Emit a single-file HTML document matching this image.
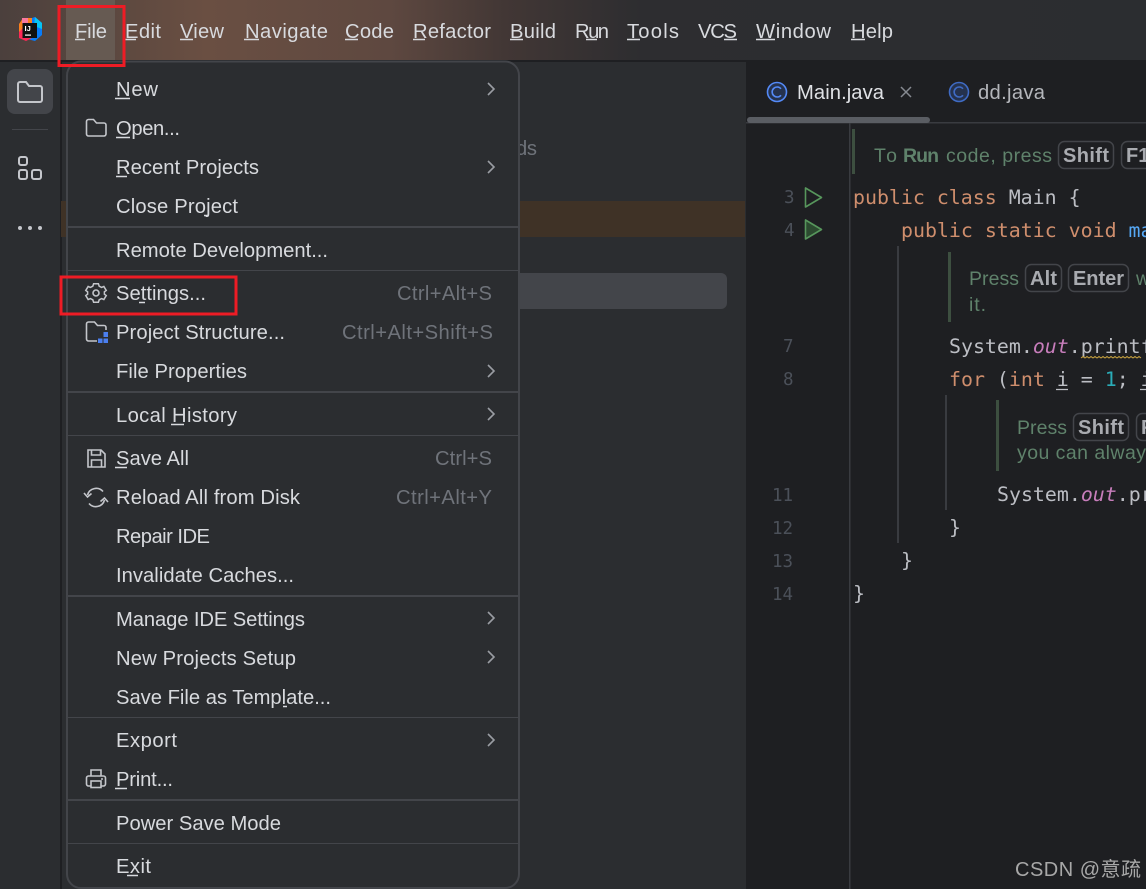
<!DOCTYPE html>
<html><head><meta charset="utf-8"><style>
html,body{margin:0;padding:0;background:#1e1f22;width:1146px;height:889px;overflow:hidden}
svg{display:block}
text{font-family:"Liberation Sans","Noto Sans CJK SC",sans-serif;white-space:pre}
.m{font-size:20.2px;fill:#d8dade}
.b{font-size:20.2px;fill:#d8dade}
.s{font-size:20.2px;fill:#6f737a}
.c{font-family:"DejaVu Sans Mono","Liberation Mono",monospace;font-size:19.9px;fill:#bcbec4}
.k{fill:#cf8e6d}
.g{font-family:"DejaVu Sans Mono","Liberation Mono",monospace;font-size:17.5px;fill:#4b5059}
.d{font-size:19.5px;fill:#5f826b}
.kb{font-size:20px;font-weight:bold;fill:#a9abb0}
.box{fill:none;stroke:#43454a;stroke-width:1.5}
.u{stroke:#d8dade;stroke-width:1.5}
.i{fill:none;stroke:#c4c6cb;stroke-width:1.6}
.a{fill:none;stroke:#9a9da3;stroke-width:1.6}
</style></head><body>
<svg width="1146" height="889" viewBox="0 0 1146 889" xmlns="http://www.w3.org/2000/svg">
<defs><linearGradient id="t" x1="0" x2="1" y1="0" y2="0">
<stop offset="0" stop-color="#4b403d"/><stop offset=".18" stop-color="#6a4f42"/><stop offset=".34" stop-color="#5e4840"/><stop offset=".44" stop-color="#423735"/><stop offset=".56" stop-color="#2d2d30"/><stop offset="1" stop-color="#2b2d30"/>
</linearGradient></defs>
<rect width="1146" height="889" fill="#1e1f22"/>
<rect width="1146" height="60" fill="url(#t)"/>
<rect y="60" width="1146" height="2" fill="#1e1f22"/>
<rect x="66" y="0" width="49" height="60" fill="#665a52"/>
<!-- left strip -->
<rect x="0" y="62" width="60" height="827" fill="#2b2d30"/>
<rect x="60" y="62" width="2" height="827" fill="#1e1f22"/>
<rect x="62" y="62" width="684" height="827" fill="#2b2d30"/>
<rect x="61" y="201" width="684" height="36" fill="#3f3226"/>
<rect x="400" y="273" width="327" height="36" rx="6" fill="#43454a"/>
<text x="516" y="155" class="s" textLength="21">ds</text>
<rect x="7" y="69" width="46" height="45" rx="8" fill="#43454a"/>
<path class="i" style="stroke-width:2" d="M18 84a2 2 0 0 1 2-2h6l3 4h11a2 2 0 0 1 2 2v12a2 2 0 0 1-2 2H20a2 2 0 0 1-2-2z"/>
<rect x="12" y="129" width="36" height="1" fill="#43454a"/>
<g class="i" style="stroke-width:2"><rect x="19" y="157" width="8" height="8" rx="2"/><rect x="19" y="170" width="8" height="9" rx="2"/><rect x="32" y="170" width="9" height="9" rx="2"/></g>
<g fill="#c4c6cb"><circle cx="20" cy="228" r="2"/><circle cx="30" cy="228" r="2"/><circle cx="40" cy="228" r="2"/></g>
<!-- logo -->
<path d="M32 18l3-1 7 6v12l-7 6-8-2 5-6z" fill="#087cfa"/>
<path d="M35 17l7 6v6l-8-3z" fill="#07c3f2"/>
<path d="M19 24l4-6h9v8l-9 4-4 2z" fill="#fc801d"/>
<path d="M22 18h6v6h-6z" fill="#f97a9e"/>
<path d="M19 32l4-4 9 10-6 3-7-3z" fill="#fe2857"/>
<rect x="22.500" y="23" width="14.500" height="15" fill="#111"/>
<text x="24.500" y="31" font-size="7.500" font-weight="bold" style="fill:#fff">IJ</text>
<rect x="25" y="34.500" width="6" height="1.200" fill="#fff"/>
<!-- menu bar -->
<g class="b">
<text class="b" x="75" y="38" textLength="32">File</text>
<text class="b" x="125" y="38" textLength="36">Edit</text>
<text class="b" x="180" y="38" textLength="44">View</text>
<text class="b" x="245" y="38" textLength="83">Navigate</text>
<text class="b" x="345" y="38" textLength="49">Code</text>
<text class="b" x="413" y="38" textLength="78">Refactor</text>
<text class="b" x="510" y="38" textLength="46">Build</text>
<text class="b" x="575" y="38" textLength="34">Run</text>
<text class="b" x="627" y="38" textLength="52">Tools</text>
<text class="b" x="698" y="38" textLength="39">VCS</text>
<text class="b" x="756" y="38" textLength="75">Window</text>
<text class="b" x="851" y="38" textLength="42">Help</text>
</g>
<g class="u"><path d="M75 39.500h10M125 39.500h11M180 39.500h13M244 39.500h15M345 39.500h13M413 39.500h12M510 39.500h13M586 39.500h11M627 39.500h13M724 39.500h13M756 39.500h19M851 39.500h14" fill="none"/></g>
<!-- editor -->
<rect x="746" y="62" width="400" height="827" fill="#1e1f22"/>
<rect x="746" y="122" width="400" height="1.500" fill="#393b40"/>
<rect x="747" y="117" width="183" height="6" rx="3" fill="#5a5d63"/>
<rect x="849" y="123" width="1.500" height="766" fill="#393b40"/>
<circle cx="777" cy="92" r="9.500" fill="#25324d" stroke="#548af7" stroke-width="1.600"/>
<path d="M781 88.800a5 5 0 1 0 0 6.400" fill="none" stroke="#548af7" stroke-width="1.600"/>
<text x="797" y="99" style="font-size:20.200px;fill:#dfe1e5" textLength="87">Main.java</text>
<path d="M901 87l10 10M911 87l-10 10" stroke="#868a91" stroke-width="1.500"/>
<circle cx="959" cy="92" r="9.500" fill="#25324d" stroke="#3f6bc4" stroke-width="1.600"/>
<path d="M963 88.800a5 5 0 1 0 0 6.400" fill="none" stroke="#3f6bc4" stroke-width="1.600"/>
<text x="978" y="99" style="font-size:20.200px;fill:#b4b6bb" textLength="67">dd.java</text>
<!-- guides, doc bars -->
<rect x="897" y="246" width="2" height="297" fill="#393b40"/>
<rect x="945" y="395" width="2" height="115" fill="#393b40"/>
<rect x="852" y="129" width="3" height="45" fill="#3d4f40"/>
<rect x="948" y="252" width="3" height="70" fill="#3d4f40"/>
<rect x="996" y="400" width="3" height="71" fill="#3d4f40"/>
<!-- doc 1 -->
<text x="874" y="162" class="d" textLength="23">To</text>
<text x="903" y="162" class="d" style="font-weight:bold" textLength="36">Run</text>
<text x="946" y="162" class="d" textLength="106">code, press</text>
<rect class="box" x="1058.500" y="141.500" width="55" height="27" rx="6"/>
<text x="1063" y="162" class="kb" textLength="46">Shift</text>
<rect class="box" x="1121.500" y="141.500" width="40" height="27" rx="6"/>
<text x="1126" y="162" class="kb">F1</text>
<!-- doc 2 -->
<text x="969" y="285" class="d" textLength="50">Press</text>
<rect class="box" x="1025.500" y="264.500" width="36" height="27" rx="6"/>
<text x="1030" y="285" class="kb" textLength="27">Alt</text>
<rect class="box" x="1068.500" y="264.500" width="60" height="27" rx="6"/>
<text x="1073" y="285" class="kb" textLength="51">Enter</text>
<text x="1136" y="285" class="d">w</text>
<text x="969" y="311" class="d" textLength="17">it.</text>
<!-- doc 3 -->
<text x="1017" y="434" class="d" textLength="50">Press</text>
<rect class="box" x="1073.500" y="413.500" width="55" height="27" rx="6"/>
<text x="1078" y="434" class="kb" textLength="46">Shift</text>
<rect class="box" x="1136.500" y="413.500" width="40" height="27" rx="6"/>
<text x="1141" y="434" class="kb">F</text>
<text x="1017" y="459" class="d" textLength="129">you can alway</text>
<!-- gutter -->
<text x="784" y="203" class="g">3</text>
<text x="784" y="236" class="g">4</text>
<text x="783" y="352" class="g">7</text>
<text x="783" y="385" class="g">8</text>
<text x="772" y="501" class="g">11</text>
<text x="772" y="534" class="g">12</text>
<text x="772" y="567" class="g">13</text>
<text x="772" y="600" class="g">14</text>
<path d="M805.500 188v19l16-9.500z" fill="none" stroke="#57965c" stroke-width="1.600" stroke-linejoin="round"/>
<path d="M805.500 220v19l16-9.500z" fill="#2c4a30" stroke="#57965c" stroke-width="1.600" stroke-linejoin="round"/>
<!-- code -->
<text x="853" y="204" class="c"><tspan class="k">public class </tspan>Main {</text>
<text x="901" y="237" class="c"><tspan class="k">public static void </tspan><tspan fill="#56a8f5">ma</tspan></text>
<text x="949" y="353" class="c">System.<tspan fill="#c77dbb" font-style="italic">out</tspan>.printf</text>
<path d="M1081 358l2-1.500 2 1.500 2-1.500 2 1.500 2-1.500 2 1.500 2-1.500 2 1.500 2-1.500 2 1.500 2-1.500 2 1.500 2-1.500 2 1.500 2-1.500 2 1.500 2-1.500 2 1.500 2-1.500 2 1.500 2-1.500 2 1.500 2-1.500 2 1.500 2-1.500 2 1.500 2-1.500 2 1.500 2-1.500 2 1.500" fill="none" stroke="#c9a33f" stroke-width="1"/>
<text x="949" y="386" class="c"><tspan class="k">for</tspan> (<tspan class="k">int</tspan> i = <tspan fill="#2aacb8">1</tspan>; i</text>
<path d="M1056 389.500h12M1140 389.500h6" stroke="#bcbec4" stroke-width="1.200"/>
<text x="997" y="501" class="c">System.<tspan fill="#c77dbb" font-style="italic">out</tspan>.pr</text>
<text x="949" y="534" class="c">}</text>
<text x="901" y="567" class="c">}</text>
<text x="853" y="600" class="c">}</text>
<text x="1015" y="876" style="font-size:20px;fill:#a8a8a8" textLength="126">CSDN @意疏</text>
<!-- menu -->
<rect x="67" y="61.500" width="452" height="826.500" rx="14" fill="#2b2d30" stroke="#43454a" stroke-width="2"/>
<path stroke="#43454a" stroke-width="2" d="M68 227h450M68 392h450M68 596h450M68 800h450"/>
<path stroke="#43454a" stroke-width="1" d="M68 270.500h450M68 435.500h450M68 717.500h450M68 843.500h450"/>
<text class="m" x="116" y="96" textLength="42">New</text>
<text class="m" x="116" y="135" textLength="64">Open...</text>
<text class="m" x="116" y="174" textLength="143">Recent Projects</text>
<text class="m" x="116" y="213" textLength="122">Close Project</text>
<text class="m" x="116" y="257" textLength="212">Remote Development...</text>
<text class="m" x="116" y="300" textLength="90">Settings...</text>
<text class="m" x="116" y="339" textLength="169">Project Structure...</text>
<text class="m" x="116" y="378" textLength="131">File Properties</text>
<text class="m" x="116" y="422" textLength="121">Local History</text>
<text class="m" x="116" y="465" textLength="73">Save All</text>
<text class="m" x="116" y="504" textLength="184">Reload All from Disk</text>
<text class="m" x="116" y="543" textLength="94">Repair IDE</text>
<text class="m" x="116" y="582" textLength="178">Invalidate Caches...</text>
<text class="m" x="116" y="626" textLength="189">Manage IDE Settings</text>
<text class="m" x="116" y="665" textLength="180">New Projects Setup</text>
<text class="m" x="116" y="704" textLength="215">Save File as Template...</text>
<text class="m" x="116" y="747" textLength="61">Export</text>
<text class="m" x="116" y="786" textLength="57">Print...</text>
<text class="m" x="116" y="830" textLength="165">Power Save Mode</text>
<text class="m" x="116" y="873" textLength="35">Exit</text>
<g class="u"><path d="M115 98.500h15M116 137.500h14M116 176.500h11M204 215.500h4M139 302.500h6M171 424.500h13M115 467.500h12M283 706.500h4M115 788.500h12M127 875.500h11" fill="none"/></g>
<text class="s" x="397" y="300" textLength="95">Ctrl+Alt+S</text>
<text class="s" x="342" y="339" textLength="151">Ctrl+Alt+Shift+S</text>
<text class="s" x="435" y="465" textLength="57">Ctrl+S</text>
<text class="s" x="396" y="504" textLength="96">Ctrl+Alt+Y</text>
<g class="a"><path d="M488 83l6 6-6 6M488 161l6 6-6 6M488 365l6 6-6 6M488 408l6 6-6 6M488 612l6 6-6 6M488 651l6 6-6 6M488 734l6 6-6 6"/></g>
<!-- menu icons -->
<path class="i" d="M86.500 121.500a2 2 0 0 1 2-2h5l3 3.500h7.500a2 2 0 0 1 2 2v9a2 2 0 0 1-2 2h-15.500a2 2 0 0 1-2-2z"/>
<g class="i"><path d="M93 284h6l1 3 3 1.500 2.800-1.200 3 5-2.300 1.700v3l2.300 1.700-3 5-2.800-1.200-3 1.500-1 3h-6l-1-3-3-1.500-2.800 1.200-3-5 2.300-1.700v-3l-2.300-1.700 3-5 2.800 1.200 3-1.500z" transform="translate(19.200 56.600) scale(.8)" stroke-width="1.900"/><circle cx="96" cy="293" r="3"/></g>
<path class="i" d="M97 341h-8.500a2 2 0 0 1-2-2v-15a2 2 0 0 1 2-2h6l3 3.500h6.500a2 2 0 0 1 2 2v2.500"/>
<g fill="#4b7ff0"><rect x="98" y="338.500" width="4.500" height="4.500"/><rect x="103.500" y="332" width="4.500" height="5"/><rect x="103.500" y="338.500" width="4.500" height="4.500"/></g>
<g class="i"><path d="M88 450h13l4 4v13h-17z"/><path d="M91.500 450v5h9v-5M91.500 467v-7h10v7"/></g>
<g class="i"><path d="M87.500 495a9 9 0 0 1 15.500-3.500M104.500 500a9 9 0 0 1-15.500 3.500"/><path d="M84 493l3.500 4 4-3.500M108 502l-3.500-4-4 3.500"/></g>
<g class="i"><path d="M91 776v-6h10v6"/><rect x="86.500" y="776" width="19" height="10" rx="2"/><rect x="91" y="781" width="10" height="6.500" fill="#2b2d30"/></g>
<circle cx="102" cy="779" r="1" fill="#c4c6cb"/>
<!-- red annotations -->
<rect x="59" y="6.500" width="65" height="59" fill="none" stroke="#ee1c25" stroke-width="3"/>
<rect x="61" y="277" width="175" height="37" fill="none" stroke="#ee1c25" stroke-width="3"/>
</svg>
</body></html>
